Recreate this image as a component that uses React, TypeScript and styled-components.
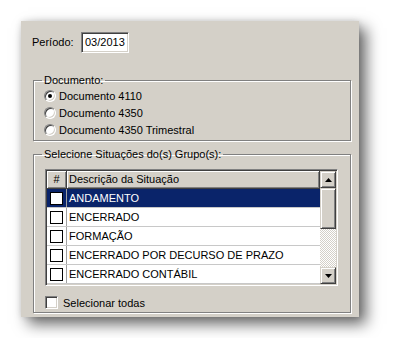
import React from "react";
import styled, { createGlobalStyle } from "styled-components";

const Global = createGlobalStyle`
  html, body { margin: 0; padding: 0; background: #fff; }
  body { font-family: "Liberation Sans", Arial, sans-serif; font-size: 11px; color: #000; }
`;

const Page = styled.div`
  padding: 21px;
`;

const Panel = styled.div`
  width: 338px;
  height: 296px;
  box-sizing: border-box;
  background: #d4d0c8;
  padding: 11px 7px 0 11px;
  display: flex;
  flex-direction: column;
  box-shadow: 7px 7px 14px rgba(0, 0, 0, 0.6), 0 0 6px rgba(0, 0, 0, 0.12);
`;

const PeriodRow = styled.div`
  display: flex;
  align-items: center;
  height: 21px;
`;

const Label = styled.span`
  width: 49px;
  line-height: 13px;
`;

const TextInput = styled.div`
  width: 48px;
  height: 21px;
  box-sizing: border-box;
  background: #fff;
  border-style: solid;
  border-width: 1px;
  border-color: #808080 #fff #fff #808080;
  box-shadow: inset 1px 1px 0 #404040, inset -1px -1px 0 #d4d0c8;
  padding: 0 0 0 3px;
  display: flex;
  align-items: center;
  line-height: 13px;
`;

const Group = styled.fieldset<{ $top: number }>`
  margin: ${(p) => p.$top}px 0 0 1px;
  width: 318px;
  box-sizing: border-box;
  border: 1px solid #808080;
  box-shadow: inset 1px 1px 0 #fff, 1px 1px 0 #fff;
  padding: 0 0 0 10px;
  min-width: 0;
`;

const Legend = styled.legend`
  padding: 0 2px;
  margin-left: -2px;
  line-height: 12px;
`;

const RadioList = styled.div`
  display: flex;
  flex-direction: column;
  padding: 1px 0 2px 0;
`;

const RadioRow = styled.label`
  display: flex;
  align-items: center;
  height: 17px;
  gap: 3px;
`;

const Radio = styled.span<{ $on?: boolean }>`
  width: 12px;
  height: 12px;
  box-sizing: border-box;
  border-radius: 50%;
  border: 1px solid;
  border-color: #808080 #fff #fff #808080;
  background: #fff;
  box-shadow: inset 1px 1px 0 #404040, inset -1px -1px 0 #d4d0c8;
  display: flex;
  align-items: center;
  justify-content: center;
  &::after {
    content: "";
    width: 4px;
    height: 4px;
    border-radius: 50%;
    background: ${(p) => (p.$on ? "#000" : "transparent")};
  }
`;

const GroupBody = styled.div`
  padding: 9px 12px 3px 1px;
  display: flex;
  flex-direction: column;
`;

const Grid = styled.div`
  width: 293px;
  height: 117px;
  box-sizing: border-box;
  border-style: solid;
  border-width: 1px;
  border-color: #808080 #fff #fff #808080;
  box-shadow: inset 1px 1px 0 #404040, inset -1px -1px 0 #d4d0c8;
  padding: 1px;
  display: flex;
  background: #fff;
`;

const Table = styled.div`
  flex: 1;
  display: flex;
  flex-direction: column;
  min-width: 0;
`;

const HeaderRow = styled.div`
  display: flex;
  height: 18px;
  background: #d4d0c8;
`;

const HeadCell = styled.div<{ $w?: number }>`
  ${(p) => (p.$w ? `width: ${p.$w}px;` : "flex: 1;")}
  box-sizing: border-box;
  border-right: 1px solid #404040;
  border-bottom: 1px solid #404040;
  box-shadow: inset 1px 1px 0 #fff, inset -1px -1px 0 #808080;
  display: flex;
  align-items: center;
  justify-content: ${(p) => (p.$w ? "center" : "flex-start")};
  padding-left: ${(p) => (p.$w ? "0" : "2px")};
  line-height: 13px;
`;

const Row = styled.div<{ $sel?: boolean }>`
  display: flex;
  height: 19px;
  box-sizing: border-box;
  border-bottom: 1px solid #c8c8c8;
  background: ${(p) => (p.$sel ? "#0a246a" : "#fff")};
  color: ${(p) => (p.$sel ? "#fff" : "#000")};
`;

const CheckCell = styled.div`
  width: 20px;
  box-sizing: border-box;
  border-right: 1px solid #a0a0a0;
  display: flex;
  align-items: center;
  justify-content: center;
`;

const FlatBox = styled.span`
  width: 13px;
  height: 13px;
  box-sizing: border-box;
  border: 1px solid #000;
  background: #fff;
`;

const TextCell = styled.div`
  flex: 1;
  padding-left: 2px;
  display: flex;
  align-items: center;
  line-height: 13px;
  white-space: nowrap;
`;

const ScrollBar = styled.div`
  width: 16px;
  display: flex;
  flex-direction: column;
  background-color: #fff;
  background-image: conic-gradient(#d4d0c8 25%, #fff 0 50%, #d4d0c8 0 75%, #fff 0);
  background-size: 2px 2px;
`;

const ScrollBtn = styled.div<{ $h: number }>`
  height: ${(p) => p.$h}px;
  box-sizing: border-box;
  background: #d4d0c8;
  border-style: solid;
  border-width: 1px;
  border-color: #d4d0c8 #404040 #404040 #d4d0c8;
  box-shadow: inset 1px 1px 0 #fff, inset -1px -1px 0 #808080;
  display: flex;
  align-items: center;
  justify-content: center;
`;

const Track = styled.div`
  flex: 1;
`;

const SelectAllRow = styled.label`
  display: flex;
  align-items: center;
  gap: 5px;
  height: 13px;
  margin-top: 10px;
`;

const Check3D = styled.span`
  width: 13px;
  height: 13px;
  box-sizing: border-box;
  background: #fff;
  border-style: solid;
  border-width: 1px;
  border-color: #808080 #fff #fff #808080;
  box-shadow: inset 1px 1px 0 #404040, inset -1px -1px 0 #d4d0c8;
`;

const Arrow = ({ up }: { up?: boolean }) => (
  <svg width="7" height="4" viewBox="0 0 7 4">
    <path d={up ? "M3.5 0 L7 4 L0 4 Z" : "M0 0 L7 0 L3.5 4 Z"} fill="#000" />
  </svg>
);

const items = [
  "ANDAMENTO",
  "ENCERRADO",
  "FORMAÇÃO",
  "ENCERRADO POR DECURSO DE PRAZO",
  "ENCERRADO CONTÁBIL",
];

export default function App() {
  return (
    <>
      <Global />
      <Page>
        <Panel>
          <PeriodRow>
            <Label>Período:</Label>
            <TextInput>03/2013</TextInput>
          </PeriodRow>
          <Group $top={21}>
            <Legend>Documento:</Legend>
            <RadioList>
              <RadioRow>
                <Radio $on />
                Documento 4110
              </RadioRow>
              <RadioRow>
                <Radio />
                Documento 4350
              </RadioRow>
              <RadioRow>
                <Radio />
                Documento 4350 Trimestral
              </RadioRow>
            </RadioList>
          </Group>
          <Group $top={7}>
            <Legend>Selecione Situações do(s) Grupo(s):</Legend>
            <GroupBody>
              <Grid>
                <Table>
                  <HeaderRow>
                    <HeadCell $w={20}>#</HeadCell>
                    <HeadCell>Descrição da Situação</HeadCell>
                  </HeaderRow>
                  {items.map((t, i) => (
                    <Row key={t} $sel={i === 0}>
                      <CheckCell>
                        <FlatBox />
                      </CheckCell>
                      <TextCell>{t}</TextCell>
                    </Row>
                  ))}
                </Table>
                <ScrollBar>
                  <ScrollBtn $h={17}>
                    <Arrow up />
                  </ScrollBtn>
                  <ScrollBtn $h={41} />
                  <Track />
                  <ScrollBtn $h={17}>
                    <Arrow />
                  </ScrollBtn>
                </ScrollBar>
              </Grid>
              <SelectAllRow>
                <Check3D />
                Selecionar todas
              </SelectAllRow>
            </GroupBody>
          </Group>
        </Panel>
      </Page>
    </>
  );
}
